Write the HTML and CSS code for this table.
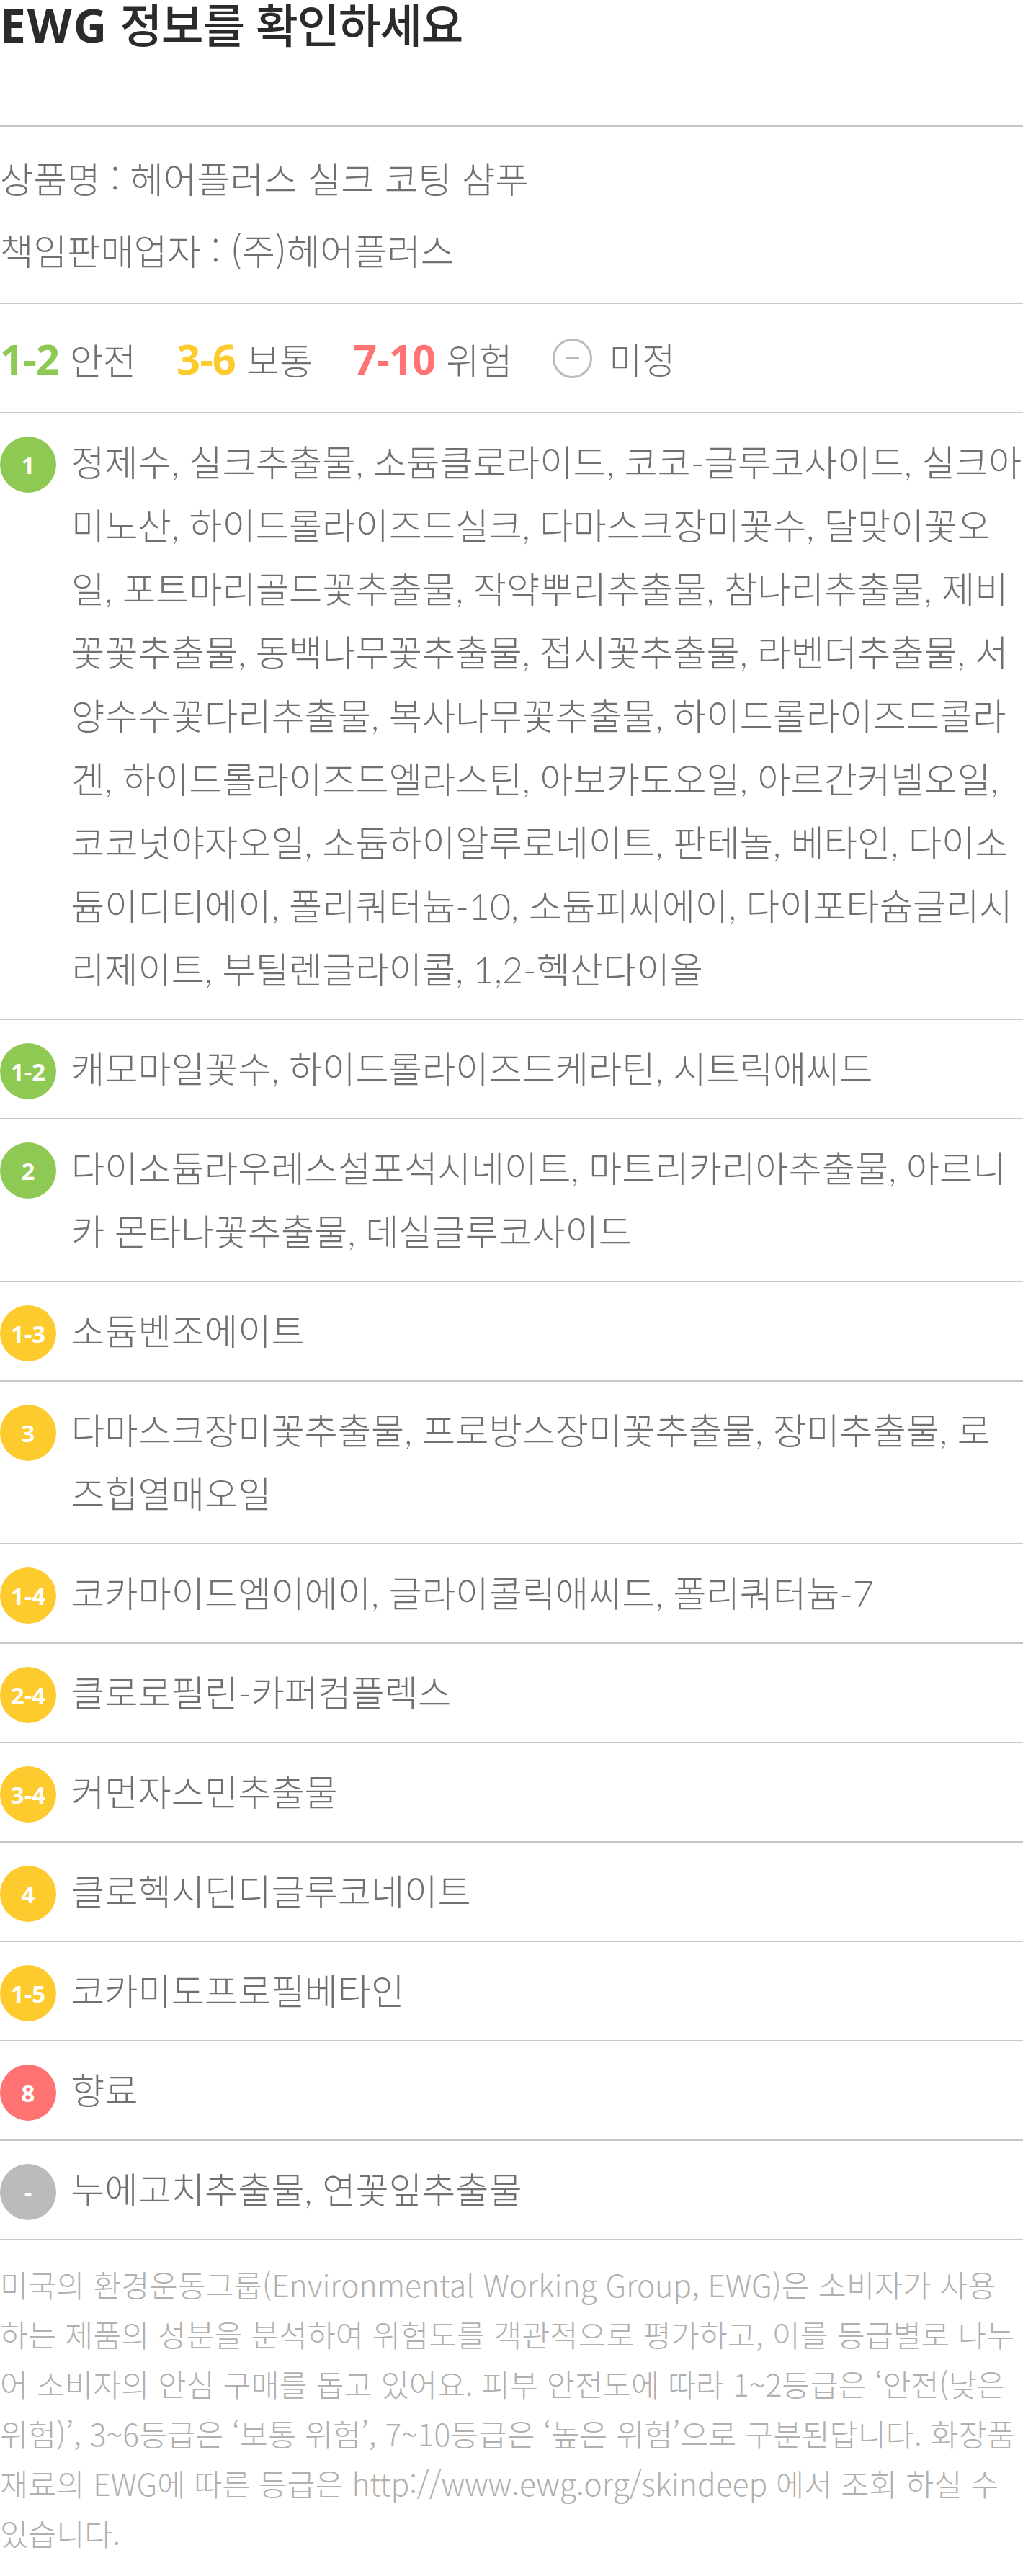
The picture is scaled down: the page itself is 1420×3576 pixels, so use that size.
FILE: index.html
```html
<!DOCTYPE html>
<html lang="ko">
<head>
    <meta charset="UTF-8">
    <meta name="viewport" content="width=device-width, initial-scale=1.0">
    <title>EWG 정보를 확인하세요</title>
    <link rel="stylesheet" href="styles.css">
</head>
<body>
<div class="ewg">
    <h1 class="ewg-title"><span class="ewg-latin">EWG</span> 정보를 확인하세요</h1>

    <div class="product-info">
        <p>상품명 : 헤어플러스 실크 코팅 샴푸</p>
        <p>책임판매업자 : (주)헤어플러스</p>
    </div>

    <div class="legend">
        <div class="legend-item"><b class="c-green">1-2</b><span>안전</span></div>
        <div class="legend-item"><b class="c-yellow">3-6</b><span>보통</span></div>
        <div class="legend-item"><b class="c-red">7-10</b><span>위험</span></div>
        <div class="legend-item legend-none"><i class="none-icon"></i><span>미정</span></div>
    </div>

    <ul class="ingredients">
        <li class="ingredient">
            <span class="grade grade-green">1</span>
            <p>정제수, 실크추출물, 소듐클로라이드, 코코-글루코사이드, 실크아미노산, 하이드롤라이즈드실크, 다마스크장미꽃수, 달맞이꽃오일, 포트마리골드꽃추출물, 작약뿌리추출물, 참나리추출물, 제비꽃꽃추출물, 동백나무꽃추출물, 접시꽃추출물, 라벤더추출물, 서양수수꽃다리추출물, 복사나무꽃추출물, 하이드롤라이즈드콜라겐, 하이드롤라이즈드엘라스틴, 아보카도오일, 아르간커넬오일, 코코넛야자오일, 소듐하이알루로네이트, 판테놀, 베타인, 다이소듐이디티에이, 폴리쿼터늄-10, 소듐피씨에이, 다이포타슘글리시리제이트, 부틸렌글라이콜, 1,2-헥산다이올</p>
        </li>
        <li class="ingredient">
            <span class="grade grade-green">1-2</span>
            <p>캐모마일꽃수, 하이드롤라이즈드케라틴, 시트릭애씨드</p>
        </li>
        <li class="ingredient">
            <span class="grade grade-green">2</span>
            <p>다이소듐라우레스설포석시네이트, 마트리카리아추출물, 아르니카 몬타나꽃추출물, 데실글루코사이드</p>
        </li>
        <li class="ingredient">
            <span class="grade grade-yellow">1-3</span>
            <p>소듐벤조에이트</p>
        </li>
        <li class="ingredient">
            <span class="grade grade-yellow">3</span>
            <p>다마스크장미꽃추출물, 프로방스장미꽃추출물, 장미추출물, 로즈힙열매오일</p>
        </li>
        <li class="ingredient">
            <span class="grade grade-yellow">1-4</span>
            <p>코카마이드엠이에이, 글라이콜릭애씨드, 폴리쿼터늄-7</p>
        </li>
        <li class="ingredient">
            <span class="grade grade-yellow">2-4</span>
            <p>클로로필린-카퍼컴플렉스</p>
        </li>
        <li class="ingredient">
            <span class="grade grade-yellow">3-4</span>
            <p>커먼자스민추출물</p>
        </li>
        <li class="ingredient">
            <span class="grade grade-yellow">4</span>
            <p>클로헥시딘디글루코네이트</p>
        </li>
        <li class="ingredient">
            <span class="grade grade-yellow">1-5</span>
            <p>코카미도프로필베타인</p>
        </li>
        <li class="ingredient">
            <span class="grade grade-red">8</span>
            <p>향료</p>
        </li>
        <li class="ingredient">
            <span class="grade grade-gray">-</span>
            <p>누에고치추출물, 연꽃잎추출물</p>
        </li>
    </ul>

    <p class="ewg-note">미국의 환경운동그룹(Environmental Working Group, EWG)은 소비자가 사용하는 제품의 성분을 분석하여 위험도를 객관적으로 평가하고, 이를 등급별로 나누어 소비자의 안심 구매를 돕고 있어요. 피부 안전도에 따라 1~2등급은 ‘안전(낮은 위험)’, 3~6등급은 ‘보통 위험’, 7~10등급은 ‘높은 위험’으로 구분된답니다. 화장품 재료의 EWG에 따른 등급은 http://www.ewg.org/skindeep 에서 조회 하실 수 있습니다.</p>
</div>
</body>
</html>
```

FILE: styles.css
```css
body {
    margin: 0;
    background-color: #fff;
    font-family: "Noto Sans CJK KR", "Noto Sans", sans-serif;
    color: #707070;
}
.ewg {
    width: 1420px;
}
.ewg-title {
    margin: 0;
    padding-bottom: 108px;
    font-size: 64px;
    line-height: 62px;
    font-weight: 500;
    letter-spacing: -1.5px;
    color: #2b2b2b;
}
.ewg-latin {
    font-family: "Open Sans", sans-serif;
    font-weight: 700;
    letter-spacing: 2px;
}
.product-info {
    border-top: 2px solid #c8c8c8;
    padding: 20px 0 24px;
}
.product-info p {
    margin: 0;
    font-size: 50.5px;
    font-weight: 300;
    line-height: 100px;
}
.legend {
    border-top: 2px solid #c8c8c8;
    height: 150px;
    display: flex;
    align-items: center;
    gap: 56px;
    font-size: 50px;
    font-weight: 300;
}
.legend-item {
    display: flex;
    align-items: baseline;
    gap: 15px;
}
.legend-item b {
    font-family: "Open Sans", sans-serif;
    font-size: 58px;
    font-weight: 700;
    letter-spacing: -1px;
}
.legend-none {
    align-items: center;
    gap: 23px;
}
.none-icon {
    width: 49px;
    height: 49px;
    border: 3px solid #bbb;
    border-radius: 50%;
    display: flex;
    align-items: center;
    justify-content: center;
}
.none-icon::before {
    content: "";
    width: 18px;
    height: 4px;
    background-color: #bbb;
}
.c-green { color: #8ec953; }
.c-yellow { color: #fecb2f; }
.c-red { color: #ff7373; }

.ingredients {
    list-style: none;
    margin: 0;
    padding: 0;
}
.ingredient {
    border-top: 2px solid #c8c8c8;
    padding: 24px 0;
    display: flex;
    align-items: flex-start;
}
/* Lato for the commas and digits: narrower than the CJK font's */
.ingredient p {
    margin: 0;
    flex: 1;
    font-family: "Lato", "Noto Sans CJK KR", sans-serif;
    font-size: 50.25px;
    font-weight: 300;
    line-height: 88px;
}
.grade {
    flex-shrink: 0;
    width: 78px;
    height: 78px;
    margin: 8px 21px 0 0;
    border-radius: 50%;
    display: flex;
    align-items: center;
    justify-content: center;
    color: #fff;
    font-family: "Open Sans", sans-serif;
    font-weight: 700;
    font-size: 33px;
}
.grade-green { background-color: #8ec953; }
.grade-yellow { background-color: #fecb2f; }
.grade-red { background-color: #ff7373; }
.grade-gray { background-color: #bbb; }

.ewg-note {
    border-top: 2px solid #c8c8c8;
    margin: 0;
    padding: 26px 0 20px;
    font-size: 42.5px;
    font-weight: 300;
    line-height: 69px;
    color: #b0b0b0;
}
```
